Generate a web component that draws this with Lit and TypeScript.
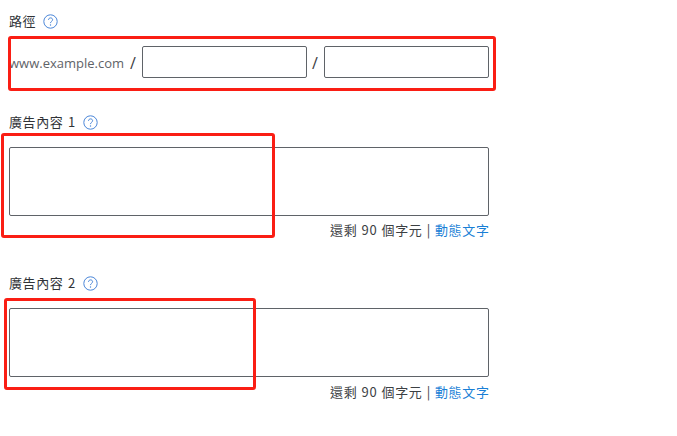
import { LitElement, html, css } from "lit";
import { customElement } from "lit/decorators.js";

const help = html`<svg class="help" viewBox="0 0 15 15" width="15" height="15" aria-hidden="true">
  <circle cx="7.5" cy="7.5" r="6.7" fill="none" stroke="#4a86d8" stroke-width="1"></circle>
  <path d="M5.5 5.9c0-1.2.9-2 2.1-2s2 .8 2 1.8c0 1.6-2.1 1.7-2.1 3.4" fill="none" stroke="#4a86d8" stroke-width="1"></path>
  <circle cx="7.5" cy="11" r=".7" fill="#4a86d8"></circle>
</svg>`;

@customElement("app-root")
export class AppRoot extends LitElement {
  static styles = css`
    :host {
      display: block;
      position: relative;
      width: 677px;
      height: 436px;
      background: #fff;
      overflow: hidden;
      font-family: "Noto Sans CJK TC", "Open Sans", sans-serif;
      color: #3c4043;
    }
    .form {
      display: flex;
      flex-direction: column;
      width: 480px;
      padding: 12px 0 0 9px;
    }
    .label {
      display: flex;
      align-items: center;
      gap: 7px;
      height: 18px;
      font-size: 13px;
      letter-spacing: 0.6px;
      word-spacing: 1.2px;
      line-height: 18px;
      color: #303337;
    }
    .help { flex: none; margin-top: 1px; }
    .path {
      display: flex;
      align-items: center;
      height: 32px;
      margin-top: 16px;
    }
    .domain {
      font-family: "Open Sans", sans-serif;
      font-size: 13px;
      line-height: 20px;
      padding-top: 2px;
      color: #5f6368;
      width: 115px;
      white-space: nowrap;
    }
    .slash {
      font-family: "Open Sans", sans-serif;
      font-size: 16px;
      line-height: 20px;
      padding-top: 2px;
      padding-left: 6px;
      box-sizing: border-box;
      color: #3c4043;
      width: 18px;
    }
    .mid { width: 17px; padding-left: 5px; }
    .input {
      box-sizing: border-box;
      width: 165px;
      height: 32px;
      border: 1px solid #5f6368;
      border-radius: 2px;
      background: #fff;
    }
    .area {
      box-sizing: border-box;
      width: 480px;
      height: 69px;
      border: 1px solid #5f6368;
      border-radius: 2px;
      background: #fff;
    }
    .first { margin-top: 35px; }
    .second { margin-top: 35px; }
    .gap { margin-top: 16px; }
    .meta {
      display: flex;
      justify-content: flex-end;
      gap: 4px;
      margin-top: 5px;
      height: 18px;
      font-size: 13px;
      letter-spacing: 0.7px;
      word-spacing: 0.5px;
      line-height: 18px;
      color: #3c4043;
      white-space: nowrap;
    }
    .second-meta { margin-top: 6px; }
    .link { color: #1a7fd6; margin-right: -0.7px; }
    .mark {
      position: absolute;
      box-sizing: border-box;
      border: 3px solid #fa1e14;
      border-radius: 3px;
      pointer-events: none;
    }
    .m1 { left: 8px; top: 36px; width: 488px; height: 55px; }
    .m2 { left: 1px; top: 133px; width: 274px; height: 105px; }
    .m3 { left: 4px; top: 298px; width: 252px; height: 92px; }
  `;

  private counter(cls = "") {
    return html`<div class="meta ${cls}"><span>還剩 90 個字元 |</span><span class="link">動態文字</span></div>`;
  }

  render() {
    return html`
      <div class="form">
        <div class="label"><span>路徑</span>${help}</div>
        <div class="path">
          <span class="domain">www.example.com</span>
          <span class="slash">/</span>
          <div class="input"></div>
          <span class="slash mid">/</span>
          <div class="input"></div>
        </div>
        <div class="label first"><span>廣告內容 1</span>${help}</div>
        <div class="area gap"></div>
        ${this.counter()}
        <div class="label second"><span>廣告內容 2</span>${help}</div>
        <div class="area gap"></div>
        ${this.counter("second-meta")}
      </div>
      <div class="mark m1"></div>
      <div class="mark m2"></div>
      <div class="mark m3"></div>
    `;
  }
}
